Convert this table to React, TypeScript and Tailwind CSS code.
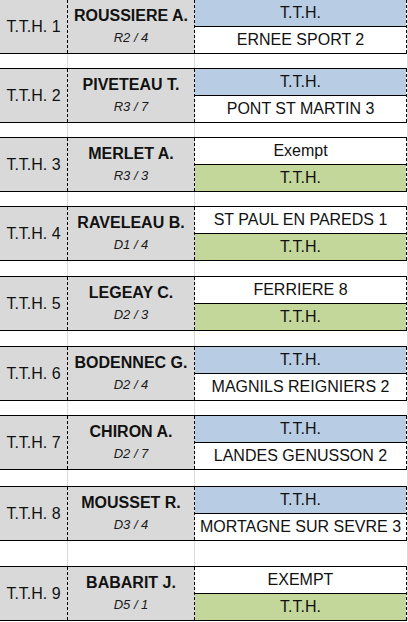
type Slot = { text: string; bg?: "blue" | "green" };

type Entry = {
  n: number;
  name: string;
  rank: string;
  top: Slot;
  bottom: Slot;
  gap: string;
};

const ENTRIES: Entry[] = [
  { n: 1, name: "ROUSSIERE A.", rank: "R2 / 4", top: { text: "T.T.H.", bg: "blue" }, bottom: { text: "ERNEE SPORT 2" }, gap: "h-[14px]" },
  { n: 2, name: "PIVETEAU T.", rank: "R3 / 7", top: { text: "T.T.H.", bg: "blue" }, bottom: { text: "PONT ST MARTIN 3" }, gap: "h-[14px]" },
  { n: 3, name: "MERLET A.", rank: "R3 / 3", top: { text: "Exempt" }, bottom: { text: "T.T.H.", bg: "green" }, gap: "h-[14px]" },
  { n: 4, name: "RAVELEAU B.", rank: "D1 / 4", top: { text: "ST PAUL EN PAREDS 1" }, bottom: { text: "T.T.H.", bg: "green" }, gap: "h-[15px]" },
  { n: 5, name: "LEGEAY C.", rank: "D2 / 3", top: { text: "FERRIERE 8" }, bottom: { text: "T.T.H.", bg: "green" }, gap: "h-[15px]" },
  { n: 6, name: "BODENNEC G.", rank: "D2 / 4", top: { text: "T.T.H.", bg: "blue" }, bottom: { text: "MAGNILS REIGNIERS 2" }, gap: "h-[14px]" },
  { n: 7, name: "CHIRON A.", rank: "D2 / 7", top: { text: "T.T.H.", bg: "blue" }, bottom: { text: "LANDES GENUSSON 2" }, gap: "h-[16px]" },
  { n: 8, name: "MOUSSET R.", rank: "D3 / 4", top: { text: "T.T.H.", bg: "blue" }, bottom: { text: "MORTAGNE SUR SEVRE 3" }, gap: "h-[25px]" },
  { n: 9, name: "BABARIT J.", rank: "D5 / 1", top: { text: "EXEMPT" }, bottom: { text: "T.T.H.", bg: "green" }, gap: "" },
];

const BG = {
  blue: "bg-[#b8cce4]",
  green: "bg-[#c4d79b]",
};

// columns: label | dash | player | dash | match | dash | sheet gridline
const COLS = "grid grid-cols-[67px_1px_126px_1px_211px_1px_1px]";
const DASH =
  "row-start-2 bg-[repeating-linear-gradient(to_bottom,#000_0px,#000_3px,transparent_3px,transparent_5px)]";

export default function App() {
  return (
    <div className="w-[408px] h-[622px] overflow-hidden bg-white font-['Liberation_Sans',Arial,sans-serif] text-[#111]">
      <div className="-mt-px">
        {ENTRIES.map((e) => (
          <div key={e.n}>
            <Block entry={e} />
            {e.gap && <Spacer h={e.gap} />}
          </div>
        ))}
      </div>
    </div>
  );
}

function Block({ entry }: { entry: Entry }) {
  return (
    <div className={COLS}>
      <div className="col-span-6 h-px bg-black" />
      <div className="row-start-2 flex items-center justify-center bg-[#d9d9d9] text-[16px]">
        T.T.H. {entry.n}
      </div>
      <div className={`${DASH} bg-[#d9d9d9]`} />
      <div className="row-start-2 flex flex-col items-center bg-[#d9d9d9] pt-[7px]">
        <div className="text-[16px] font-bold leading-[18px]">{entry.name}</div>
        <div className="text-[13px] italic leading-[16px] mt-[5px] text-[#1a1a1a]">
          {entry.rank}
        </div>
      </div>
      <div className={`${DASH} bg-[#d9d9d9]`} />
      <div className="row-start-2 flex flex-col">
        <Cell slot={entry.top} />
        <div className="h-px bg-black" />
        <Cell slot={entry.bottom} />
      </div>
      <div className={DASH} />
      <div className="row-start-2 bg-[#dadada]" />
      <div className="col-span-6 h-px bg-black" />
    </div>
  );
}

function Cell({ slot }: { slot: Slot }) {
  return (
    <div
      className={`h-[26px] flex items-center justify-center text-[16px] leading-none ${
        slot.bg ? BG[slot.bg] : "bg-white"
      }`}
    >
      {slot.text}
    </div>
  );
}

function Spacer({ h }: { h: string }) {
  return (
    <div className={`${COLS} ${h}`}>
      <div />
      <div className="bg-[#dadada]" />
      <div />
      <div className="bg-[#dadada]" />
      <div />
      <div />
      <div className="bg-[#dadada]" />
    </div>
  );
}
